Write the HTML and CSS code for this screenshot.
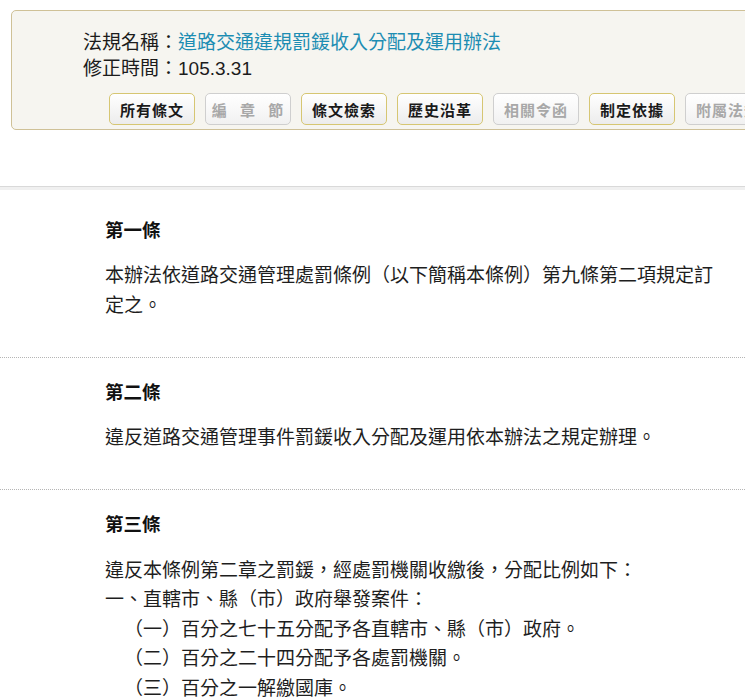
FILE: index.html
```html
<!DOCTYPE html>
<html lang="zh-Hant">
<head>
<meta charset="utf-8">
<title>道路交通違規罰鍰收入分配及運用辦法</title>
<link rel="stylesheet" href="styles.css">
</head>
<body>
<div class="page">
  <div class="law-header">
    <div class="law-info">
      <div class="info-row"><span class="label">法規名稱：</span><a class="law-name" href="#">道路交通違規罰鍰收入分配及運用辦法</a></div>
      <div class="info-row"><span class="label">修正時間：</span><span class="num">105.3.31</span></div>
    </div>
    <div class="btn-row">
      <a class="btn" href="#">所有條文</a>
      <span class="btn disabled spaced">編 章 節</span>
      <a class="btn" href="#">條文檢索</a>
      <a class="btn" href="#">歷史沿革</a>
      <span class="btn disabled">相關令函</span>
      <a class="btn" href="#">制定依據</a>
      <span class="btn disabled">附屬法規</span>
    </div>
  </div>

  <div class="separator"></div>

  <div class="article first">
    <h3 class="article-no">第一條</h3>
    <div class="article-body">
      <p class="line">本辦法依道路交通管理處罰條例（以下簡稱本條例）第九條第二項規定訂定之。</p>
    </div>
  </div>

  <div class="article">
    <h3 class="article-no">第二條</h3>
    <div class="article-body">
      <p class="line">違反道路交通管理事件罰鍰收入分配及運用依本辦法之規定辦理。</p>
    </div>
  </div>

  <div class="article">
    <h3 class="article-no">第三條</h3>
    <div class="article-body">
      <p class="line">違反本條例第二章之罰鍰，經處罰機關收繳後，分配比例如下：</p>
      <p class="line">一、直轄市、縣（市）政府舉發案件：</p>
      <p class="line sub">（一）百分之七十五分配予各直轄市、縣（市）政府。</p>
      <p class="line sub">（二）百分之二十四分配予各處罰機關。</p>
      <p class="line sub">（三）百分之一解繳國庫。</p>
    </div>
  </div>
</div>
</body>
</html>
```
FILE: styles.css
```css
html, body {
  margin: 0;
  padding: 0;
  overflow: hidden;
  background: #ffffff;
}

body {
  font-family: "Liberation Sans", "Noto Sans CJK TC", sans-serif;
  color: #1a1a1a;
}

.page {
  width: 745px;
}

.law-header {
  margin: 10px 0 0 11px;
  width: 800px;
  height: 120px;
  box-sizing: border-box;
  border: 1px solid #cfc197;
  border-radius: 5px;
  background: #f6f5f0;
  padding: 19px 0 0 71px;
}

.law-info {
  font-size: 19px;
  line-height: 26px;
}

.info-row {
  white-space: nowrap;
  color: #1c1c1c;
}

.law-name {
  color: #1d8db3;
  text-decoration: none;
}

.btn-row {
  display: flex;
  gap: 10px;
  margin: 11px 0 0 26px;
}

.btn {
  flex: 0 0 auto;
  width: 86px;
  height: 32px;
  box-sizing: border-box;
  border: 1px solid #d6c672;
  border-radius: 5px;
  background: linear-gradient(#ffffff, #ececec);
  display: flex;
  align-items: center;
  justify-content: center;
  font-size: 15px;
  font-weight: bold;
  color: #1a1a1a;
  text-decoration: none;
  white-space: nowrap;
  letter-spacing: 1px;
}

.btn.disabled {
  border-color: #cfcfcf;
  color: #a8a8a8;
  background: linear-gradient(#ffffff, #f1f1f1);
}

.btn.spaced {
  word-spacing: 7px;
}

.separator {
  margin-top: 56px;
  height: 3px;
  border-top: 1px solid #d9d9d9;
  background: #f0f0f0;
}

.article {
  padding: 20px 0 38.5px 105px;
  border-bottom: 1px dotted #b5b5b5;
}

.article.first {
  padding-top: 25.5px;
}

.article-no {
  margin: 0 0 14.5px 0;
  font-size: 18.5px;
  line-height: 29px;
  font-weight: bold;
  color: #111;
}

.article-body {
  width: 615px;
  font-family: "Noto Sans CJK TC", sans-serif;
  font-size: 19px;
  line-height: 29.5px;
  color: #1e1e1e;
}

.line {
  margin: 0;
}

.line.sub {
  padding-left: 1em;
}
```
